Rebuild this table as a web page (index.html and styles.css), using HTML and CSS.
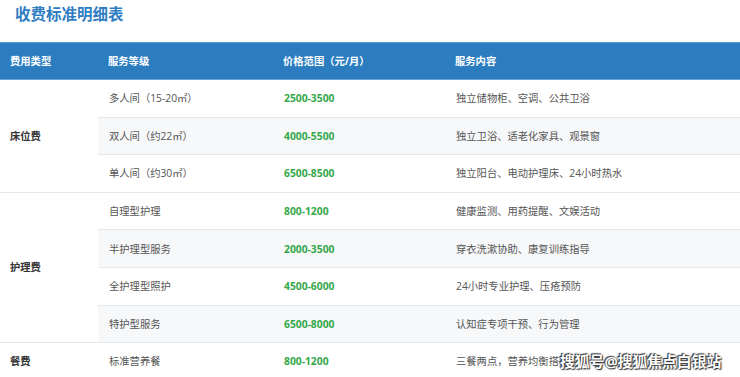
FILE: index.html
```html
<!DOCTYPE html>
<html lang="zh-CN">
<head>
  <meta charset="UTF-8">
  <title>收费标准明细表</title>
  <link rel="stylesheet" href="styles.css">
</head>
<body>
  <div class="page">
    <h2 class="title">收费标准明细表</h2>
    <table class="fee-table">
      <colgroup>
        <col class="c-type">
        <col class="c-level">
        <col class="c-price">
        <col class="c-desc">
      </colgroup>
      <thead>
        <tr>
          <th>费用类型</th>
          <th>服务等级</th>
          <th>价格范围（元/月）</th>
          <th>服务内容</th>
        </tr>
      </thead>
      <tbody>
        <tr>
          <td class="type" rowspan="3">床位费</td>
          <td>多人间（15-20㎡）</td>
          <td class="price">2500-3500</td>
          <td>独立储物柜、空调、公共卫浴</td>
        </tr>
        <tr class="alt">
          <td>双人间（约22㎡）</td>
          <td class="price">4000-5500</td>
          <td>独立卫浴、适老化家具、观景窗</td>
        </tr>
        <tr>
          <td>单人间（约30㎡）</td>
          <td class="price">6500-8500</td>
          <td>独立阳台、电动护理床、24小时热水</td>
        </tr>
        <tr>
          <td class="type" rowspan="4">护理费</td>
          <td>自理型护理</td>
          <td class="price">800-1200</td>
          <td>健康监测、用药提醒、文娱活动</td>
        </tr>
        <tr class="alt">
          <td>半护理型服务</td>
          <td class="price">2000-3500</td>
          <td>穿衣洗漱协助、康复训练指导</td>
        </tr>
        <tr>
          <td>全护理型照护</td>
          <td class="price">4500-6000</td>
          <td>24小时专业护理、压疮预防</td>
        </tr>
        <tr class="alt">
          <td>特护型服务</td>
          <td class="price">6500-8000</td>
          <td>认知症专项干预、行为管理</td>
        </tr>
        <tr>
          <td class="type">餐费</td>
          <td>标准营养餐</td>
          <td class="price">800-1200</td>
          <td>三餐两点，营养均衡搭配</td>
        </tr>
      </tbody>
    </table>
    <div class="watermark">搜狐号@搜狐焦点白银站</div>
  </div>
</body>
</html>
```

FILE: styles.css
```css
body {
  margin: 0;
  font-family: "Open Sans", "Noto Sans CJK SC", sans-serif;
  color: #555;
  background: #fff;
  overflow: hidden;
}
.page {
  position: relative;
  height: 377px;
  overflow: hidden;
}
.title {
  margin: 0;
  padding: 3px 15px 0;
  font-size: 15.5px;
  line-height: 22px;
  font-weight: bold;
  color: #2f7dc2;
}
.fee-table {
  width: 740px;
  margin-top: 17px;
  border-collapse: collapse;
  table-layout: fixed;
  font-size: 10.3px;
}
.c-type {
  width: 98px;
}
.c-level {
  width: 175px;
}
.c-price {
  width: 172px;
}
.c-desc {
  width: 295px;
}
th {
  background: #2c7dbf;
  color: #fff;
  font-weight: bold;
  text-align: left;
  padding: 11px 10px;
  line-height: 14px;
  border-top: 1px solid #5b9bd2;
  border-bottom: 1px solid #6aa5d8;
}
td {
  padding: 11.3px 10px 11.3px 11px;
  line-height: 14px;
  border-bottom: 1px solid #e6e8eb;
  vertical-align: middle;
}
td.type {
  padding-left: 10px;
  font-weight: bold;
  color: #333;
  background: #fff;
}
tr.alt td {
  background: #f7f8fa;
}
.price {
  color: #35a84a;
  font-weight: bold;
}
.watermark {
  position: absolute;
  left: 560px;
  top: 350px;
  font-size: 14.8px;
  line-height: 22px;
  font-weight: bold;
  color: #fff;
  text-shadow: 0 0 2px #333, 1px 1px 1px #333, -1px -1px 1px #333;
  white-space: nowrap;
}
```
